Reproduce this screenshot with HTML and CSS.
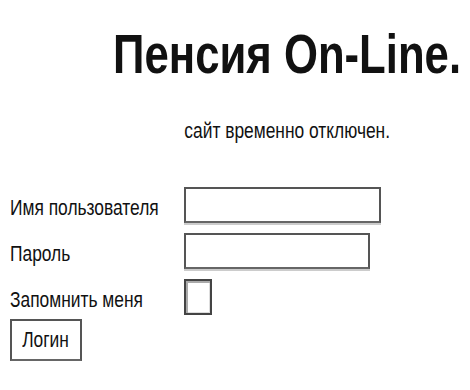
FILE: index.html
```html
<!DOCTYPE html>
<html>

<head>
    <meta charset="utf-8" />
    <title>Пенсия On-Line.</title>
    <link rel="stylesheet" href="styles.css">
</head>

<body>
    <div class="header">
        <h1><span class="narrow-c">Пенсия On-Line.</span></h1>
        <p class="notice"><span class="narrow-c">сайт временно отключен.</span></p>
    </div>

    <form class="login-form">
        <label for="username"><span class="narrow">Имя пользователя</span></label>
        <input type="text" name="username" id="username" class="field-wide">

        <label for="password"><span class="narrow">Пароль</span></label>
        <input type="password" name="password" id="password" class="field">

        <label for="remember"><span class="narrow">Запомнить меня</span></label>
        <div><span class="check" id="remember"></span></div>

        <button type="submit" class="btn-login"><span class="narrow-c">Логин</span></button>
    </form>
</body>

</html>
```

FILE: styles.css
```css
body {
    margin: 0;
    padding: 0 0 0 10px;
    font-family: "Liberation Sans", Arial, sans-serif;
    color: #111;
    background: #fff;
    overflow: hidden;
}

/* the page text is squeezed sideways */
.narrow,
.narrow-c {
    display: inline-block;
    white-space: nowrap;
    transform: scaleX(0.79);
}

.narrow {
    transform-origin: left center;
}

.narrow-c {
    transform-origin: center center;
}

.header {
    display: flex;
    flex-direction: column;
    align-items: center;
    padding-left: 94px;
    overflow: hidden;
}

h1 {
    margin: 0;
    padding-top: 23px;
    font-size: 56px;
    font-weight: bold;
    line-height: 62px;
    white-space: nowrap;
}

h1 .narrow-c {
    transform: scaleX(0.78);
}

.notice {
    margin: 33px 0 0;
    font-size: 22px;
    line-height: 26px;
}

.login-form {
    display: grid;
    grid-template-columns: 174px auto;
    align-items: center;
    row-gap: 10px;
    margin-top: 43px;
    font-size: 22px;
}

.login-form label {
    padding-top: 6px;
    line-height: 26px;
    white-space: nowrap;
}

input {
    box-sizing: border-box;
    height: 36px;
    margin: 0;
    border: 2px solid #555;
    border-bottom-color: #666;
    box-shadow: 0 2px 0 #ccc;
    background: #fff;
}

.field-wide {
    width: 197px;
}

.field {
    width: 186px;
}

.check {
    display: block;
    box-sizing: border-box;
    width: 28px;
    height: 36px;
    border: 2px solid #444;
    box-shadow: inset 2px 2px 0 #aaa, inset -1px -1px 0 #ddd;
    background: #fff;
}

.btn-login {
    grid-column: 1;
    justify-self: start;
    box-sizing: border-box;
    width: 72px;
    height: 42px;
    margin-top: -6px;
    padding: 0;
    border: 2px solid #555;
    border-bottom-color: #666;
    box-shadow: 0 2px 0 #ccc;
    background: #fff;
    font-family: inherit;
    font-size: 22px;
    color: #111;
}
```
